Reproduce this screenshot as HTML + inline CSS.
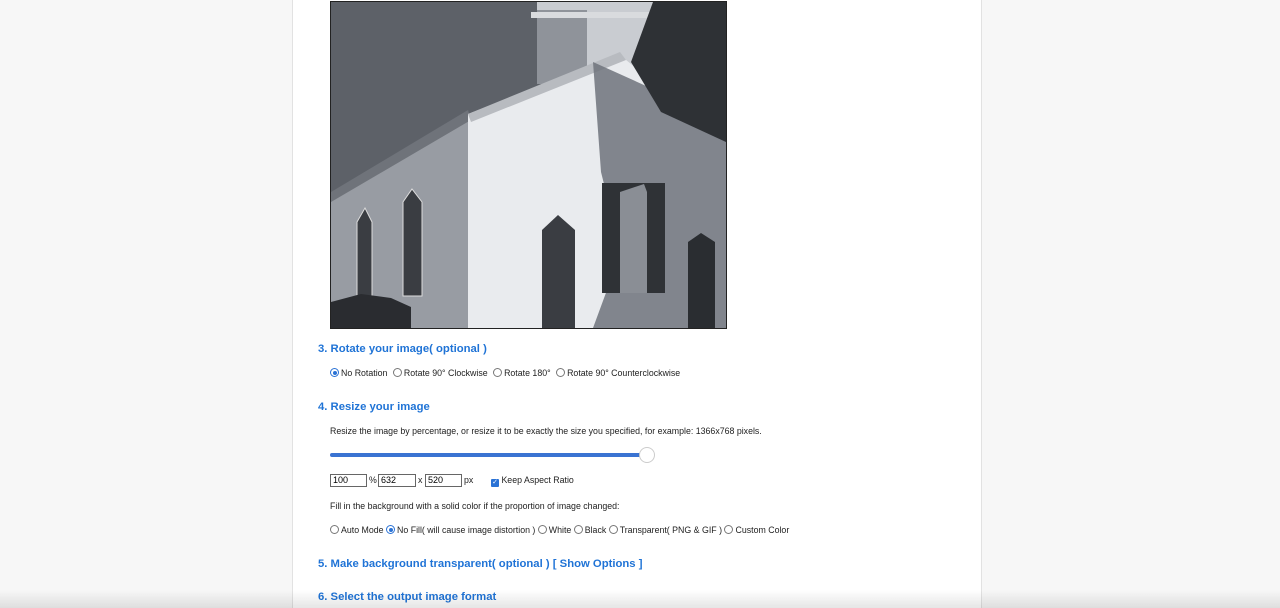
<!DOCTYPE html>
<html><head><style>
body{margin:0;width:1280px;height:608px;overflow:hidden;background:#f7f7f7;font-family:"Liberation Sans",Arial,sans-serif;position:relative}
.panel{position:absolute;left:292px;top:0;width:688px;height:608px;background:#fff;border-left:1px solid #e2e2e2;border-right:1px solid #e2e2e2}
.a{position:absolute;white-space:nowrap}
h3{margin:0;font-size:11.3px;color:#1f73d6;font-weight:bold}
.s{font-size:8.8px;color:#222}
.r{display:inline-block;width:7px;height:7px;border:1px solid #777;border-radius:50%;vertical-align:-1px;margin-right:2px;background:#fff;position:relative}
.r.on{border-color:#2a72d5}
.r.on:after{content:"";position:absolute;left:1.5px;top:1.5px;width:4px;height:4px;border-radius:50%;background:#2a72d5}
.in{position:absolute;height:11px;border:1px solid #666;font-size:9px;line-height:11px;padding-left:2px;box-sizing:content-box}
.shadow{position:absolute;left:0;top:590px;width:1280px;height:18px;background:linear-gradient(#fff0,#0000001a)}
.g{margin-left:3px}
</style></head><body>
<div class="panel"></div>
<svg class="a" style="left:330px;top:1px" width="397" height="328" viewBox="-1 -1 397 328">
<rect x="-0.5" y="-0.5" width="396" height="327" fill="#5d6168" stroke="#222"/>
<polygon points="206,0 322,0 322,82 206,82" fill="#c9ccd1"/>
<polygon points="206,8 256,8 256,82 206,82" fill="#8f939a"/>
<polygon points="200,10 330,10 330,16 200,16" fill="#d9dbde"/>
<polygon points="0,195 137,112 137,326 0,326" fill="#989ca3"/>
<polygon points="0,190 137,108 140,118 0,200" fill="#6f737a"/>
<polygon points="137,112 289,53 395,140 395,326 137,326" fill="#e9ebee"/>
<polygon points="137,112 289,50 295,58 140,120" fill="#b8bbc0"/>
<polygon points="262,60 395,120 395,326 262,326 290,250 270,170" fill="#6f737b" opacity=".85"/>
<polygon points="322,0 395,0 395,140 330,110 300,60" fill="#2e3135"/>
<polygon points="271,181 334,181 334,291 271,291" fill="#2f3236"/>
<polygon points="289,190 313,182 316,190 316,291 289,291" fill="#8a8e95"/>
<polygon points="357,240 370,231 384,240 384,326 357,326" fill="#2a2d31"/>
<polygon points="211,228 227,213 244,228 244,326 211,326" fill="#3a3d42"/>
<polygon points="26,220 34,206 41,220 41,296 26,296" fill="#3a3d42" stroke="#ddd"/>
<polygon points="72,200 81,187 91,200 91,294 72,294" fill="#3a3d42" stroke="#ddd"/>
<polygon points="0,300 30,292 60,296 80,305 80,326 0,326" fill="#2a2c30"/>
</svg>
<div class="a" style="left:318px;top:343px"><h3>3. Rotate your image( optional )</h3></div>
<div class="a s" style="left:330px;top:368px"><span class="r on"></span>No Rotation <span class="r g"></span>Rotate 90° Clockwise <span class="r g"></span>Rotate 180° <span class="r g"></span>Rotate 90° Counterclockwise</div>
<div class="a" style="left:318px;top:401px"><h3>4. Resize your image</h3></div>
<div class="a s" style="left:330px;top:426px">Resize the image by percentage, or resize it to be exactly the size you specified, for example: 1366x768 pixels.</div>
<div class="a" style="left:330px;top:453px;width:312px;height:4px;background:#3a73d2;border-radius:2px"></div>
<div class="a" style="left:639px;top:447px;width:14px;height:14px;border-radius:50%;background:#fff;border:1px solid #ccc"></div>
<div class="in" style="left:330px;top:474px;width:33px">100</div>
<div class="a s" style="left:369px;top:475px">%</div>
<div class="in" style="left:378px;top:474px;width:34px">632</div>
<div class="a s" style="left:418px;top:475px">x</div>
<div class="in" style="left:425px;top:474px;width:33px">520</div>
<div class="a s" style="left:464px;top:475px">px</div>
<div class="a s" style="left:491px;top:475px"><span style="display:inline-block;width:8px;height:8px;background:#2a72d5;border-radius:1px;vertical-align:-1px;color:#fff;font-size:7px;line-height:8px;text-align:center">✓</span> Keep Aspect Ratio</div>
<div class="a s" style="left:330px;top:501px">Fill in the background with a solid color if the proportion of image changed:</div>
<div class="a s" style="left:330px;top:525px"><span class="r"></span>Auto Mode <span class="r on"></span>No Fill( will cause image distortion ) <span class="r"></span>White <span class="r"></span>Black <span class="r"></span>Transparent( PNG &amp; GIF ) <span class="r"></span>Custom Color</div>
<div class="a" style="left:318px;top:558px"><h3>5. Make background transparent( optional ) [ Show Options ]</h3></div>
<div class="a" style="left:318px;top:591px"><h3>6. Select the output image format</h3></div>
<div class="shadow"></div>
</body></html>
